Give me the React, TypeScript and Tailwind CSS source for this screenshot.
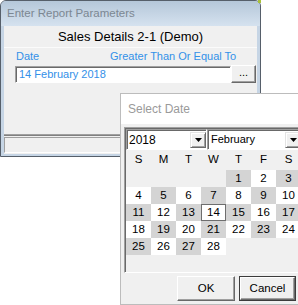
import React from "react";

const rows: (number | null)[][] = [
  [null, null, null, null, 1, 2, 3],
  [4, 5, 6, 7, 8, 9, 10],
  [11, 12, 13, 14, 15, 16, 17],
  [18, 19, 20, 21, 22, 23, 24],
  [25, 26, 27, 28, null, null, null],
];

const heads = ["S", "M", "T", "W", "T", "F", "S"];

function Arrow() {
  return (
    <svg width="7" height="4" viewBox="0 0 7 4">
      <path d="M0 0H7L3.5 4Z" fill="#000" />
    </svg>
  );
}

function DropBtn() {
  return (
    <div className="w-[16px] h-[16px] flex items-center justify-center bg-[#f0f0f0] border border-t-[#e3e3e3] border-l-[#e3e3e3] border-b-[#696969] border-r-[#696969] shadow-[inset_1px_1px_0_#ffffff,inset_-1px_-1px_0_#a0a0a0]">
      <Arrow />
    </div>
  );
}

export default function App() {
  return (
    <div className="relative w-[298px] h-[305px] bg-white overflow-hidden font-['Liberation_Sans',Arial,sans-serif]">
      {/* main window */}
      <div className="w-[261px] h-[157px] rounded-t-[6px] border border-[#565f6a] bg-[#c6d5e5] flex flex-col">
        <div className="h-[25px] shrink-0 rounded-t-[5px] bg-gradient-to-b from-[#b5c7d9] to-[#d5e2ef] flex items-center pl-[6px] text-[11.5px] text-[#7c8792]">
          Enter Report Parameters
        </div>
        <div className="mx-[3px] mb-[2px] flex-1 bg-[#f0f0f0] flex flex-col">
          <div className="h-[22px] shrink-0 flex items-center justify-center text-[13px] text-black border-b border-[#fbfbfb]">
            Sales Details 2-1 (Demo)
          </div>
          <div className="h-[15px] flex items-center text-[11px] text-[#3390e8] mt-[1px]">
            <span className="ml-[12px] w-[94px]">Date</span>
            <span>Greater Than Or Equal To</span>
          </div>
          <div className="flex items-start mt-[1px] ml-[11px]">
            <div className="mt-[1px] w-[216px] h-[17px] bg-white border border-t-[#a0a0a0] border-l-[#a0a0a0] border-b-white border-r-white shadow-[inset_1px_1px_0_#696969] flex items-center pl-[3px] text-[11px] text-[#3390e8]">
              14 February 2018
            </div>
            <div className="w-[25px] h-[18px] bg-[#f0f0f0] border border-t-white border-l-white border-b-[#696969] border-r-[#696969] shadow-[inset_-1px_-1px_0_#a0a0a0] flex items-center justify-center text-[11px] text-black leading-none pb-[3px]">
              ...
            </div>
          </div>
          <div className="flex-1" />
          <div className="h-[2px] bg-[#a0a0a0] border-b border-[#808080]" />
          <div className="h-[16px] mt-[1px] mb-[1px] border border-t-[#a0a0a0] border-l-[#a0a0a0] border-b-white border-r-white" />
        </div>
      </div>

      {/* tiny desktop corner */}
      <div className="absolute left-[258px] top-0 w-[3px] h-[3px] bg-[#a9c23a]" />

      {/* Select Date dialog */}
      <div className="absolute left-[120px] top-[93px] w-[190px] h-[212px] border border-[#bcbcbc] bg-[#f0f0f0] flex flex-col">
        <div className="h-[30px] shrink-0 bg-white flex items-center pl-[7px] text-[12px] text-[#9a9a9a]">
          Select Date
        </div>
        <div className="ml-[3px] mt-[3px] w-[190px] h-[146px] border-t border-l border-t-[#a0a0a0] border-l-[#a0a0a0] border-b border-b-white">
          <div className="w-full h-full border-t border-l border-t-[#696969] border-l-[#696969] bg-[#f0f0f0] flex flex-col">
            <div className="h-[21px] flex">
              <div className="w-[81px] h-[21px] bg-white border border-t-[#a0a0a0] border-l-[#a0a0a0] border-b-white border-r-white shadow-[inset_1px_1px_0_#696969] flex items-center">
                <span className="flex-1 pl-[2px] text-[12px] text-black">2018</span>
                <DropBtn />
              </div>
              <div className="w-[95px] h-[21px] bg-white border border-t-[#a0a0a0] border-l-[#a0a0a0] border-b-white border-r-white shadow-[inset_1px_1px_0_#696969] flex items-center">
                <span className="flex-1 pl-[3px] text-[11px] text-black">February</span>
                <DropBtn />
              </div>
            </div>
            <div className="h-[20px] flex">
              {heads.map((h, i) => (
                <div key={i} className="w-[25px] shrink-0 flex items-center justify-center text-[11.5px] text-black">
                  {h}
                </div>
              ))}
            </div>
            {rows.map((r, ri) => (
              <div key={ri} className="h-[17px] flex">
                {r.map((d, ci) => {
                  if (d === null)
                    return <div key={ci} className="w-[25px] shrink-0" />;
                  const gray = d % 2 === 1;
                  const sel = d === 14;
                  return (
                    <div
                      key={ci}
                      className={
                        sel
                          ? "w-[25px] shrink-0 flex items-center justify-center text-[11.5px] text-black bg-white border border-[#6e6e6e]"
                          : gray
                          ? "w-[25px] shrink-0 flex items-center justify-center text-[11.5px] text-black bg-[#d4d4d4]"
                          : "w-[25px] shrink-0 flex items-center justify-center text-[11.5px] text-black bg-white"
                      }
                    >
                      {d}
                    </div>
                  );
                })}
              </div>
            ))}
          </div>
        </div>
        <div className="flex mt-[3px] ml-[56px] gap-[4px]">
          <div className="w-[58px] h-[25px] bg-[#f0f0f0] border border-t-white border-l-white border-b-[#696969] border-r-[#696969] shadow-[inset_-1px_-1px_0_#a0a0a0] flex items-center justify-center text-[11.5px] text-black">
            OK
          </div>
          <div className="w-[57px] h-[25px] border border-[#3c3c3c]">
            <div className="w-full h-full bg-[#f0f0f0] border border-t-white border-l-white border-b-[#696969] border-r-[#696969] shadow-[inset_-1px_-1px_0_#a0a0a0] flex items-center justify-center text-[11.5px] text-black">
              Cancel
            </div>
          </div>
        </div>
      </div>
    </div>
  );
}
